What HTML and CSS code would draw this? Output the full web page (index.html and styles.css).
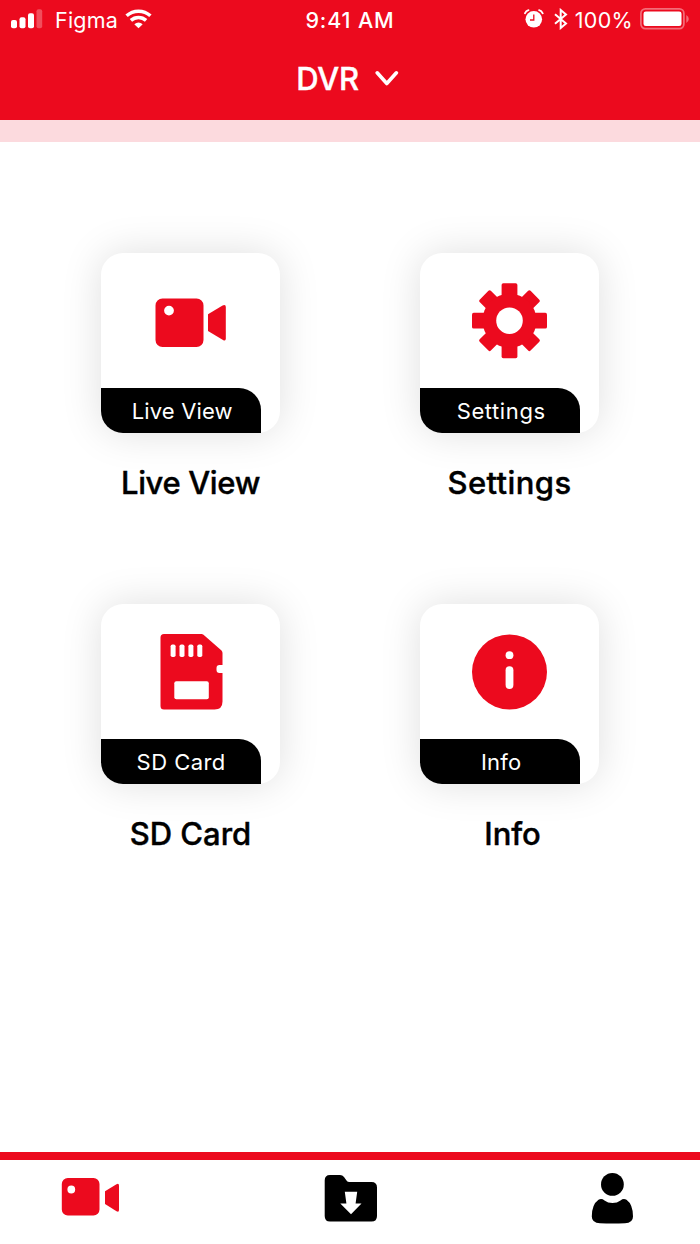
FILE: index.html
```html
<!DOCTYPE html>
<html lang="en">
<head>
<meta charset="utf-8">
<title>DVR</title>
<link rel="stylesheet" href="styles.css">
</head>
<body>
<svg class="defs" aria-hidden="true">
  <symbol id="camera" viewBox="0 0 72 50">
    <path fill-rule="evenodd" d="M7.5.5H41.5a7 7 0 0 1 7 7V42a7 7 0 0 1-7 7H7.500a7 7 0 0 1-7-7V7.500a7 7 0 0 1 7-7ZM14 7.700a4.900 4.900 0 1 0 0 9.800 4.900 4.900 0 0 0 0-9.800Z"/>
    <path d="M53 16.200 67.600 7.400Q70.800 6 70.800 9V40.500Q70.800 43.500 68 42L53 33Z"/>
  </symbol>
</svg>
<div class="screen">
  <header class="header">
    <div class="status">
      <div class="status-left">
        <svg class="signal white" width="32" height="20" viewBox="0 0 32 20"><rect x="0" y="11" width="6" height="8.200" rx="2"/><rect x="8.500" y="8.200" width="6" height="11" rx="2"/><rect x="17" y="4.200" width="6" height="15" rx="2"/><rect x="25.500" y=".3" width="5.700" height="19" rx="2" opacity=".28"/></svg>
        <span class="carrier">Figma</span>
        <svg class="wifi" width="28" height="20" viewBox="0 0 28 20"><g fill="none" stroke="#fff" stroke-width="3.500"><path d="M1.600 6.800A17.500 17.500 0 0 1 25.400 6.800"/><path d="M5.900 11.400A11.200 11.200 0 0 1 21.100 11.400"/></g><path fill="#fff" d="m13.500 19.300-4.200-4.100q4.200-3.200 8.400 0Z"/></svg>
      </div>
      <span class="clock">9:41 AM</span>
      <div class="status-right">
        <svg class="alarm" width="20" height="20" viewBox="0 0 20 20"><circle cx="9.800" cy="10.300" r="8.300" fill="#fff"/><path d="M9.800 5.500V11H6" fill="none" stroke="#ec0a1e" stroke-width="1.300"/><path d="M.9 4.300Q2 1.800 4.500 1.100M15.100 1.100Q17.600 1.800 18.700 4.300" fill="none" stroke="#fff" stroke-width="1.800" stroke-linecap="round"/></svg>
        <svg class="bluetooth" width="14" height="22" viewBox="0 0 14 22"><path d="M1 6.200 12 15.600 6.700 20V2L12 6.400 1 15.800" fill="none" stroke="#fff" stroke-width="2"/></svg>
        <span class="percent">100%</span>
        <svg class="battery" width="50" height="22" viewBox="0 0 50 22"><rect x=".9" y=".9" width="43" height="19.700" rx="4.500" fill="none" stroke="#fff" stroke-width="1.700" opacity=".4"/><rect x="3.500" y="3.400" width="38" height="14.600" rx="2.300" fill="#fff"/><path d="M46.300 7v8q2.500-1.300 2.500-4t-2.500-4Z" fill="#fff" opacity=".4"/></svg>
      </div>
    </div>
    <div class="title-row">
      <h1 class="title">DVR</h1>
      <svg class="chevron" width="24" height="18" viewBox="0 0 24 18"><path d="M2.200 3.800 11.800 14.500 21.400 3.800" fill="none" stroke="#fff" stroke-width="3.600" stroke-linecap="round" stroke-linejoin="round"/></svg>
    </div>
  </header>
  <main class="grid">
    <section class="item">
      <div class="card">
        <div class="art art-camera"><svg width="72" height="50"><use href="#camera"/></svg></div>
        <div class="label label-live">Live View</div>
      </div>
      <h2 class="name name-live">Live View</h2>
    </section>
    <section class="item">
      <div class="card">
        <div class="art"><svg width="75" height="76" viewBox="-37.500 -37.700 75 76">
          <defs><rect id="tooth" x="-7.900" y="-37.500" width="15.800" height="20" rx="1.700"/><rect id="tooth-small" x="-7.900" y="-36" width="15.800" height="20" rx="1.700"/></defs>
          <use href="#tooth"/><use href="#tooth" transform="rotate(90)"/><use href="#tooth" transform="rotate(180)"/><use href="#tooth" transform="rotate(270)"/>
          <use href="#tooth-small" transform="rotate(45)"/><use href="#tooth-small" transform="rotate(135)"/><use href="#tooth-small" transform="rotate(225)"/><use href="#tooth-small" transform="rotate(315)"/>
          <circle r="27"/><circle r="13.300" fill="#fff"/></svg></div>
        <div class="label label-settings">Settings</div>
      </div>
      <h2 class="name name-settings">Settings</h2>
    </section>
    <section class="item">
      <div class="card">
        <div class="art art-sd"><svg width="64" height="78" viewBox="0 0 64 78"><path d="M4 1H41.500Q42.500 1 43.500 1.800L61.500 17.500Q62.500 18.500 62.500 20V32H59.500Q56.500 32 56.500 35V37Q56.500 40 59.500 40H62.500V68.500Q62.500 76.500 54.500 76.500H4Q.5 76.500.5 73V4.500Q.5 1 4 1Z"/><g fill="#fff"><rect x="10.600" y="11.500" width="5" height="12.500" rx="1.800"/><rect x="19.500" y="11.500" width="5" height="12.500" rx="1.800"/><rect x="28.400" y="11.500" width="5" height="12.500" rx="1.800"/><rect x="37.300" y="11.500" width="5" height="12.500" rx="1.800"/><rect x="14.300" y="48.300" width="34.500" height="18" rx="2"/></g></svg></div>
        <div class="label label-sd">SD Card</div>
      </div>
      <h2 class="name name-sd">SD Card</h2>
    </section>
    <section class="item">
      <div class="card">
        <div class="art art-info"><svg width="75" height="76" viewBox=".5 0 75 76"><circle cx="38" cy="38" r="37.500"/><circle cx="38" cy="21.200" r="3.900" fill="#fff"/><rect x="34.100" y="32.300" width="7.800" height="22.600" rx="3.900" fill="#fff"/></svg></div>
        <div class="label label-info">Info</div>
      </div>
      <h2 class="name name-info">Info</h2>
    </section>
  </main>
  <nav class="tabs">
    <svg class="tab-camera" width="60" height="40" viewBox="0 0 60 40"><path fill-rule="evenodd" d="M6.800 1H32.500a6 6 0 0 1 6 6V32.500a6 6 0 0 1-6 6H6.800a6 6 0 0 1-6-6V7a6 6 0 0 1 6-6ZM10.300 8.600a3.900 3.900 0 1 0 0 7.800 3.900 3.900 0 0 0 0-7.800Z"/><path d="M44 14.200 55.500 7.200Q58 6 58 8.500V33Q58 35.500 55.500 34.200L44 27Z"/></svg>
    <svg class="tab-folder" width="54" height="49" viewBox="0 0 54 49"><path d="M6 1H16Q18.500 1 20 3L22.500 6.500Q23.500 8 25.500 8H47.500Q53 8 53 13.500V42Q53 47.500 47.500 47.500H6Q.7 47.500.7 42V6.500Q.7 1 6 1Z" fill="#000"/><path d="M20.800 17.700H33.200L31.600 29.500H37.500L27 40.300 16.300 29.500H22.400Z" fill="#fff"/></svg>
    <svg class="tab-user black" width="44" height="53" viewBox="0 0 44 53"><circle cx="21.400" cy="11.400" r="11.400"/><path d="M7.500 26.800Q10.500 25 13.500 27.500 16.800 30 21.500 30T29.500 27.500Q32.500 25 35.500 26.800 42 31.500 42 43.500 42 50 34 50.300 21.500 50.700 9 50.300.8 50 .8 43.500 .8 31.500 7.500 26.800Z"/></svg>
  </nav>
</div>
</body>
</html>
```

FILE: styles.css
```css
* { box-sizing: border-box; }
body { margin: 0; background: #fff; font-family: Inter, "Liberation Sans", sans-serif; }
svg { display: block; flex: none; fill: #ec0a1e; }
.white { fill: #fff; }
.black { fill: #000; }
.defs { display: none; }
.screen { width: 700px; height: 1244px; display: flex; flex-direction: column; overflow: hidden; }
.header { height: 142px; flex: none; background: #ec0a1e; border-bottom: 22.500px solid #fcdade; color: #fff; }
.status { height: 39px; display: grid; grid-template-columns: 1fr auto 1fr; align-items: center; line-height: 26px; font-size: 21.500px; }
.status-left, .status-right { display: flex; align-items: center; }
.status-left { padding-left: 11px; }
.status-right { justify-content: flex-end; padding-right: 10px; }
.signal { margin-bottom: 2px; }
.carrier { margin-left: 12px; letter-spacing: .2px; }
.wifi { margin: 0 0 1px 7px; }
.clock { font-weight: 500; letter-spacing: .85px; }
.alarm { margin-bottom: 2px; }
.bluetooth { margin: 0 0 1px 10px; }
.percent { margin-left: 7px; letter-spacing: .3px; }
.battery { margin: 0 0 1px 7px; }
.title-row { height: 79px; display: flex; justify-content: center; align-items: center; gap: 16px; padding-right: 5px; }
.title { margin: 0; font-size: 31px; line-height: 38px; font-weight: 500; letter-spacing: -.2px; -webkit-text-stroke: .4px #fff; }
.chevron { margin-bottom: 1px; }
.grid { flex: 1; display: grid; grid-template-columns: 179px 179px; grid-template-rows: 250px 250px; justify-content: center; column-gap: 140px; row-gap: 100.800px; padding-top: 111.400px; }
.card { width: 179px; height: 179.400px; border-radius: 22px; background: #fff; box-shadow: 0 0 40px rgba(0, 0, 0, .13); display: flex; flex-direction: column; }
.art { flex: 1; display: flex; justify-content: center; align-items: center; }
.art-camera { padding: 4px 0 0 1px; }
.art-sd { padding: 1px 0 0 2px; }
.art-info { padding-top: 1px; }
.label { width: 160.400px; height: 44.600px; border-radius: 0 22px 0 22px; background: #000; color: #fff; font-size: 22px; line-height: 46px; text-align: center; letter-spacing: .6px; }
.label-live { padding-left: 2px; letter-spacing: .15px; }
.label-settings { padding-left: 2px; }
.label-sd { letter-spacing: .45px; }
.label-info { padding-left: 2px; letter-spacing: .2px; }
.name { margin: 30.300px 0 0; text-align: center; font-size: 31px; line-height: 40px; font-weight: 500; white-space: nowrap; -webkit-text-stroke: .4px #000; }
.name-live { letter-spacing: -.35px; }
.name-settings { letter-spacing: .4px; }
.name-sd { letter-spacing: 0; }
.name-info { padding-left: 6px; letter-spacing: -.1px; }
.tabs { height: 92px; flex: none; border-top: 8px solid #ec0a1e; display: flex; justify-content: space-between; align-items: flex-start; padding: 13px 65px 0 61px; }
.tab-camera { margin-top: 4px; }
.tab-folder { margin: 1px 10px 0 0; }
```
